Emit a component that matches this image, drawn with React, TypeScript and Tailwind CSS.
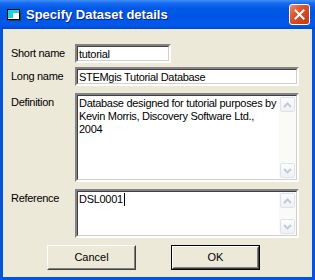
import React from "react";

function ScrollBtn({ up }: { up: boolean }) {
  return (
    <div className="w-[15px] h-[15px] rounded-[2px] border border-[#DCE2EE] bg-[linear-gradient(to_bottom,#FDFDFD,#EEF0F4)] flex items-center justify-center">
      <svg width="9" height="6" viewBox="0 0 9 6">
        {up ? (
          <path d="M1 5 L4.5 1.5 L8 5" fill="none" stroke="#C4CBD8" strokeWidth="2" />
        ) : (
          <path d="M1 1 L4.5 4.5 L8 1" fill="none" stroke="#C4CBD8" strokeWidth="2" />
        )}
      </svg>
    </div>
  );
}

function ScrollBar() {
  return (
    <div className="w-[17px] h-full shrink-0 bg-[#FAFAF8] flex flex-col items-center justify-between py-[1px]">
      <ScrollBtn up />
      <ScrollBtn up={false} />
    </div>
  );
}

const sunken =
  "border-2 border-t-[#848284] border-l-[#848284] border-b-[#FFFFFF] border-r-[#FFFFFF] bg-white";

function Sunken({ className, children }: { className: string; children?: React.ReactNode }) {
  return (
    <div className={`${sunken} ${className}`}>
      <div className="w-full h-full border border-t-[#404040] border-l-[#404040] border-b-[#D4D0C8] border-r-[#D4D0C8] flex overflow-hidden">
        {children}
      </div>
    </div>
  );
}

function Btn({ label, def }: { label: string; def?: boolean }) {
  return (
    <div className={`w-[89px] h-[25px] ${def ? "border border-black" : ""}`}>
      <div className="w-full h-full border border-t-white border-l-white border-b-[#404040] border-r-[#404040]">
        <div className="w-full h-full border border-t-[#ECE9D8] border-l-[#ECE9D8] border-b-[#808080] border-r-[#808080] bg-[#ECE9D8] flex items-center justify-center text-[11px] text-black">
          {label}
        </div>
      </div>
    </div>
  );
}

export default function App() {
  return (
    <div
      className="w-[315px] h-[280px] flex flex-col bg-[#0054E3] overflow-hidden"
      style={{ fontFamily: '"Liberation Sans", Arial, sans-serif' }}
    >
      {/* Title bar */}
      <div className="h-[29px] shrink-0 flex items-center pl-[6px] pr-[5px] bg-[linear-gradient(to_bottom,#3D8FF7_0%,#1769F0_12%,#0058E6_30%,#0055E5_60%,#005AEE_85%,#0048D0_100%)]">
        <svg width="16" height="14" viewBox="0 0 16 14" className="shrink-0">
          <rect x="1.5" y="1.5" width="12" height="10" fill="#FFFFFF" stroke="#000" />
          <rect x="2" y="2" width="11" height="3" fill="#22D0D8" />
          <rect x="2" y="5" width="5" height="5" fill="#22D0D8" />
          <rect x="14" y="3" width="1" height="9" fill="#3A3A3A" />
          <rect x="3" y="12" width="12" height="1" fill="#3A3A3A" />
        </svg>
        <div
          className="ml-[4px] text-white font-bold text-[13px]"
          style={{ textShadow: "1px 1px 0 #0A1E8C", fontFamily: '"Liberation Sans", Arial, sans-serif' }}
        >
          Specify Dataset details
        </div>
        <div className="flex-1" />
        <div className="w-[21px] h-[21px] rounded-[3px] border border-white bg-[linear-gradient(135deg,#EB8C6E_0%,#E0562F_35%,#D1431C_70%,#C33A14_100%)] flex items-center justify-center">
          <svg width="11" height="11" viewBox="0 0 11 11">
            <path d="M1.5 1.5 L9.5 9.5 M9.5 1.5 L1.5 9.5" stroke="#FFFFFF" strokeWidth="2" strokeLinecap="square" />
          </svg>
        </div>
      </div>

      {/* Body */}
      <div className="flex-1 mx-[3px] mb-[3px] bg-[#ECE9D8] pl-[8px] pt-[15px] text-[11px] leading-[13px] tracking-[-0.3px] text-black">
        <div className="flex items-start">
          <div className="w-[64px] pt-[3px]">Short name</div>
          <Sunken className="w-[96px] h-[19px]">
            <div className="pl-[1px] pt-[1px]">tutorial</div>
          </Sunken>
        </div>
        <div className="flex items-start mt-[4px]">
          <div className="w-[64px] pt-[3px]">Long name</div>
          <Sunken className="w-[224px] h-[19px]">
            <div className="pl-[1px] pt-[1px] whitespace-nowrap">STEMgis Tutorial Database</div>
          </Sunken>
        </div>
        <div className="flex items-start mt-[7px]">
          <div className="w-[64px] pt-[3px]">Definition</div>
          <Sunken className="w-[224px] h-[89px]">
            <div className="flex-1 pl-[1px] pt-[1px] whitespace-nowrap overflow-hidden">
              Database designed for tutorial purposes by
              <br />
              Kevin Morris, Discovery Software Ltd.,
              <br />
              2004
            </div>
            <ScrollBar />
          </Sunken>
        </div>
        <div className="flex items-start mt-[7px]">
          <div className="w-[64px] pt-[3px]">Reference</div>
          <Sunken className="w-[224px] h-[49px]">
            <div className="flex-1 pl-[1px] pt-[1px] flex items-start">
              <span>DSL0001</span>
              <span className="inline-block w-[1px] h-[13px] bg-black ml-[1px]" />
            </div>
            <ScrollBar />
          </Sunken>
        </div>
        <div className="flex mt-[7px] ml-[36px] gap-[35px] tracking-normal">
          <Btn label="Cancel" />
          <Btn label="OK" def />
        </div>
      </div>
    </div>
  );
}
